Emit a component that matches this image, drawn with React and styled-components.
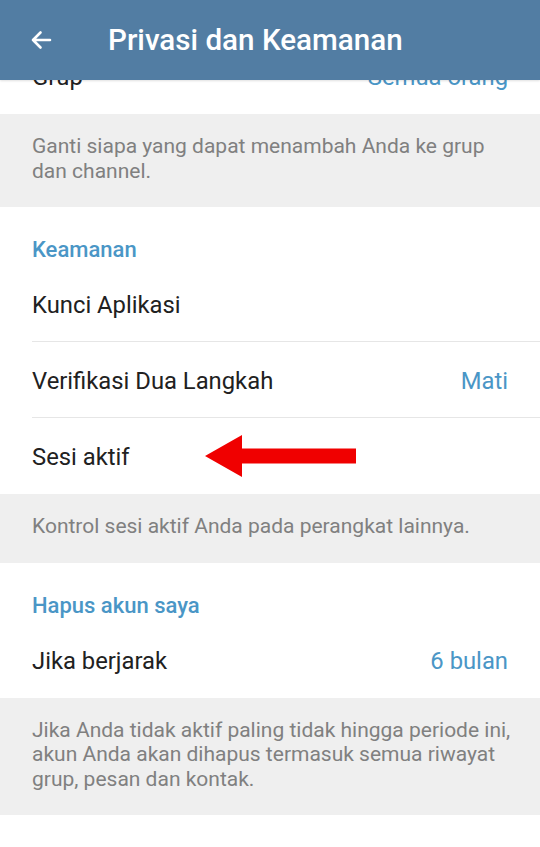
import React from 'react';
import styled, { createGlobalStyle } from 'styled-components';

const GlobalStyle = createGlobalStyle`
	* {
		box-sizing: border-box;
	}
	body {
		margin: 0;
		font-family: Roboto, 'Noto Sans', sans-serif;
		background: #fff;
	}
`;

export default function App() {
	return (
		<Screen>
			<GlobalStyle />
			<Header>
				<BackButton aria-label="Kembali">
					<svg width="24" height="24" viewBox="0 0 24 24" fill="none">
						<path
							d="M21 12H4M11.5 4.5L4 12l7.5 7.5"
							stroke="#fff"
							strokeWidth="2.6"
							strokeLinecap="round"
							strokeLinejoin="round"
						/>
					</svg>
				</BackButton>
				<Title>Privasi dan Keamanan</Title>
			</Header>

			<List>
				<Row>
					<Label>Grup</Label>
					<Value>Semua orang</Value>
				</Row>
				<Note>Ganti siapa yang dapat menambah Anda ke grup dan channel.</Note>

				<SectionTitle>Keamanan</SectionTitle>
				<Row divider>
					<Label>Kunci Aplikasi</Label>
				</Row>
				<Row divider>
					<Label>Verifikasi Dua Langkah</Label>
					<Value>Mati</Value>
				</Row>
				<Row>
					<Label>Sesi aktif</Label>
					<Pointer width="152" height="42" viewBox="0 0 152 42">
						<polygon
							points="0,21 37,0 37,13.5 151,13.5 151,28.5 37,28.5 37,42"
							fill="#f00000"
						/>
					</Pointer>
				</Row>
				<Note>Kontrol sesi aktif Anda pada perangkat lainnya.</Note>

				<SectionTitle>Hapus akun saya</SectionTitle>
				<Row>
					<Label>Jika berjarak</Label>
					<Value>6 bulan</Value>
				</Row>
				<Note>
					Jika Anda tidak aktif paling tidak hingga periode ini, akun Anda akan
					dihapus termasuk semua riwayat grup, pesan dan kontak.
				</Note>
			</List>
		</Screen>
	);
}

const Screen = styled.div`
	width: 540px;
	height: 847px;
	overflow: hidden;
	background: #fff;
`;

const Header = styled.header`
	position: sticky;
	top: 0;
	z-index: 2;
	height: 80px;
	display: flex;
	align-items: center;
	padding-left: 29px;
	background-color: #527da3;
	box-shadow: 0 1px 2px rgba(0, 0, 0, 0.12);
`;

const BackButton = styled.button`
	display: flex;
	padding: 0;
	border: none;
	background: none;
	margin-top: -1px;
`;

const Title = styled.h1`
	margin: 0 0 0 55px;
	color: #fff;
	font-size: 29.6px;
	font-weight: 500;
`;

const List = styled.div`
	margin-top: -42px;
`;

const Row = styled.div`
	position: relative;
	height: 76px;
	padding: 2px 32px 0;
	display: flex;
	align-items: center;
	justify-content: space-between;
	font-size: 23.8px;
	background: #fff;

	&::after {
		content: '';
		display: ${(p) => (p.divider ? 'block' : 'none')};
		position: absolute;
		left: 32px;
		right: 0;
		bottom: 0;
		height: 1px;
		background: #e6e6e6;
	}
`;

const Label = styled.span`
	color: #212121;
`;

const Value = styled.span`
	color: #4a96c6;
`;

const SectionTitle = styled.div`
	height: 59px;
	padding: 30px 32px 0;
	line-height: 26px;
	font-size: 22px;
	font-weight: 500;
	color: #4a96c6;
`;

const Note = styled.p`
	margin: 0;
	padding: 20px 22px 24px 32px;
	background: #efefef;
	color: #808080;
	font-size: 21px;
	line-height: 24.5px;
`;

const Pointer = styled.svg`
	position: absolute;
	left: 205px;
	top: 17px;
`;
